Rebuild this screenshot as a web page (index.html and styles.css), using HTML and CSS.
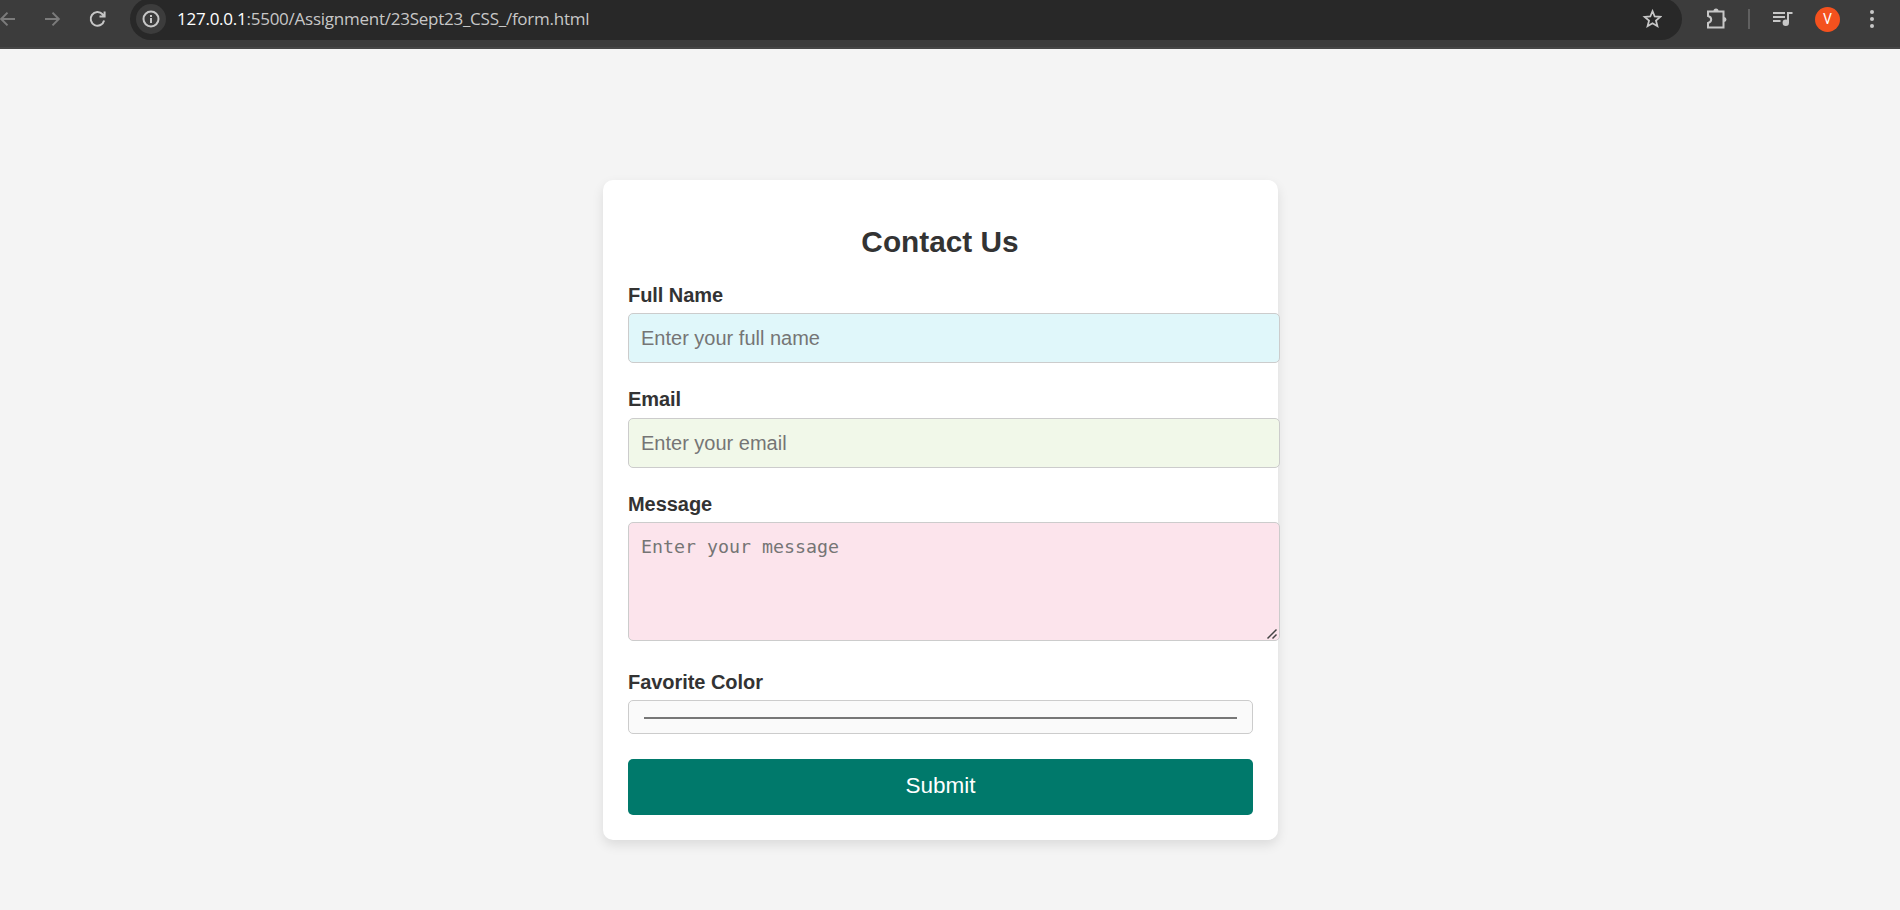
FILE: index.html
```html
<!DOCTYPE html>
<html lang="en">
<head>
<meta charset="utf-8">
<title>Contact Us</title>
<link rel="stylesheet" href="styles.css">
</head>
<body>
<header class="toolbar">
  <nav class="nav">
    <svg class="icon dim" width="20" height="20" viewBox="0 0 20 20"><path d="M17 10H3.500M9.500 3.600L3.200 10L9.500 16.400"/></svg>
    <svg class="icon dim" width="20" height="20" viewBox="0 0 20 20"><path d="M2 10H15.500M9.500 3.600L15.800 10L9.500 16.400"/></svg>
    <svg class="icon" width="20" height="20" viewBox="0 0 20 20"><path d="M16.100 11.500A6.800 6.800 0 1 1 14.500 5.300L16.500 7.300M16.600 2.500V7.600H11.500"/></svg>
  </nav>
  <div class="address">
    <span class="info"><svg class="icon" width="18" height="18" viewBox="0 0 18 18"><circle cx="9" cy="9" r="7.500"/><path d="M9 8V13M9 5V7"/></svg></span>
    <span class="url"><span class="host">127.0.0.1</span>:5500/Assignment/23Sept23_CSS_/form.html</span>
    <svg class="icon star" width="20" height="20" viewBox="0 0 20 20"><path d="M10.500 2.200L12.700 7.500L18.300 7.900L14 11.600L15.400 17.200L10.500 14.200L5.600 17.200L7 11.600L2.700 7.900L8.300 7.500Z"/></svg>
  </div>
  <div class="actions">
    <svg class="icon" width="22" height="22" viewBox="0 0 22 22"><path d="M2 3.500H17.500V19.500H2V15Q5.200 14.200 5.200 11.500Q5.200 8.800 2 8Z"/><path class="solid" d="M7.500 3A2.500 2.500 0 0 1 12.500 3ZM18 9A2.500 2.500 0 0 1 18 14Z"/></svg>
    <span class="divider"></span>
    <svg class="icon media" width="20" height="16" viewBox="0 0 20 16"><path d="M0 2H12M0 6H12M0 10H7.500M15 12V2H19.500"/><circle class="solid" cx="12.800" cy="11.700" r="3.200"/></svg>
    <span class="avatar">V</span>
    <svg class="icon dots" width="6" height="20" viewBox="0 0 6 20"><circle class="solid" cx="3" cy="3" r="2"/><circle class="solid" cx="3" cy="10" r="2"/><circle class="solid" cx="3" cy="17" r="2"/></svg>
  </div>
</header>
<main class="page">
  <form class="card">
    <h2 class="title">Contact Us</h2>
    <label class="label" for="name">Full Name</label>
    <input class="field field-name" id="name" type="text" placeholder="Enter your full name">
    <label class="label label-email" for="email">Email</label>
    <input class="field field-email" id="email" type="email" placeholder="Enter your email">
    <label class="label" for="message">Message</label>
    <div class="message-wrap">
      <textarea class="field field-message" id="message" placeholder="Enter your message"></textarea>
      <svg class="grip" width="12" height="12" viewBox="0 0 12 12"><path d="M1.500 10.500L10.500 1.500M6.500 10.500L10.500 6.500"/></svg>
    </div>
    <label class="label">Favorite Color</label>
    <div class="color"><span class="swatch"></span></div>
    <button class="submit" type="button">Submit</button>
  </form>
</main>
</body>
</html>
```
FILE: styles.css
```css
body {
  margin: 0;
  height: 910px;
  overflow: hidden;
  background: #f4f4f4;
  font-family: "Liberation Sans", Arial, sans-serif;
  color: #333;
}

/* Browser toolbar */
.toolbar {
  box-sizing: border-box;
  height: 49px;
  display: flex;
  align-items: flex-start;
  background: #3c3c3c;
  border-bottom: 2px solid #464646;
}
.nav {
  width: 130px;
  display: flex;
  gap: 25px;
  margin: 9px 0 0 -2px;
}
.icon {
  display: block;
  flex: none;
  fill: none;
  stroke: #c7c7c7;
  stroke-width: 2;
}
.dim { stroke: #7b7b7b; }
.solid { fill: #c7c7c7; stroke: none; }
.address {
  box-sizing: border-box;
  width: 1552px;
  height: 42px;
  margin: -2px 0 0 2px;
  padding: 0 20px 0 6px;
  display: flex;
  align-items: center;
  border-radius: 21px;
  background: #282828;
}
.info {
  width: 30px;
  height: 30px;
  display: grid;
  place-items: center;
  border-radius: 50%;
  background: #3c3c3c;
}
.url {
  flex: 1;
  margin-left: 11px;
  font: 17px/24px "Open Sans", sans-serif;
  letter-spacing: -0.250px;
  color: #c7c7c7;
}
.host { color: #fff; }
.star { stroke-width: 1.800; }
.actions {
  height: 38px;
  display: flex;
  align-items: center;
  margin-left: 24px;
}
.divider {
  width: 2px;
  height: 20px;
  margin-left: 20px;
  background: #606060;
}
.media { margin-left: 23px; }
.avatar {
  width: 25px;
  height: 25px;
  margin-left: 22px;
  border-radius: 50%;
  background: #f4511e;
  color: #fff;
  font: 14px/25px Roboto, sans-serif;
  text-align: center;
}
.dots { margin-left: 29px; }

/* Contact form */
.page {
  display: flex;
  justify-content: center;
  padding: 131px 19px 0 0;
}
.card {
  box-sizing: border-box;
  width: 675px;
  height: 660px;
  padding: 45px 25px 25px;
  border-radius: 10px;
  background: #fff;
  box-shadow: 0 5px 12px rgba(0, 0, 0, 0.1);
}
.title {
  margin: 0 1px 25px 0;
  font-size: 29.800px;
  line-height: 34px;
  text-align: center;
}
.label {
  display: block;
  margin-bottom: 6px;
  font-size: 20px;
  font-weight: bold;
  line-height: 23px;
  letter-spacing: -0.050px;
}
.label-email { margin-bottom: 7px; }
.field {
  box-sizing: border-box;
  display: block;
  width: 652px;
  height: 50px;
  margin: 0 0 25px;
  padding: 12px;
  border: 1px solid #ccc;
  border-radius: 5px;
  font: 20px "Liberation Sans", Arial, sans-serif;
}
.field::placeholder { color: #757575; }
.field-name { background: #e0f7fa; }
.field-email { background: #f1f8e9; }
.message-wrap {
  position: relative;
  width: 652px;
  margin-bottom: 30px;
}
.field-message {
  height: 119px;
  margin: 0;
  resize: none;
  background: #fce4ec;
  font: 18.270px/23px "DejaVu Sans Mono", monospace;
}
.grip {
  position: absolute;
  right: 2px;
  bottom: 1px;
  fill: none;
  stroke: #444;
  stroke-width: 1.500;
}
.color {
  box-sizing: border-box;
  height: 34px;
  margin-bottom: 25px;
  padding: 16px 15px;
  border: 1px solid #ccc;
  border-radius: 5px;
  background: #fafafa;
}
.swatch {
  display: block;
  height: 2px;
  background: #777;
}
.submit {
  display: block;
  width: 100%;
  height: 56px;
  padding: 0 0 2px;
  border: 0;
  border-radius: 5px;
  background: #00796b;
  color: #fff;
  font: 22.500px "Liberation Sans", Arial, sans-serif;
}
```
